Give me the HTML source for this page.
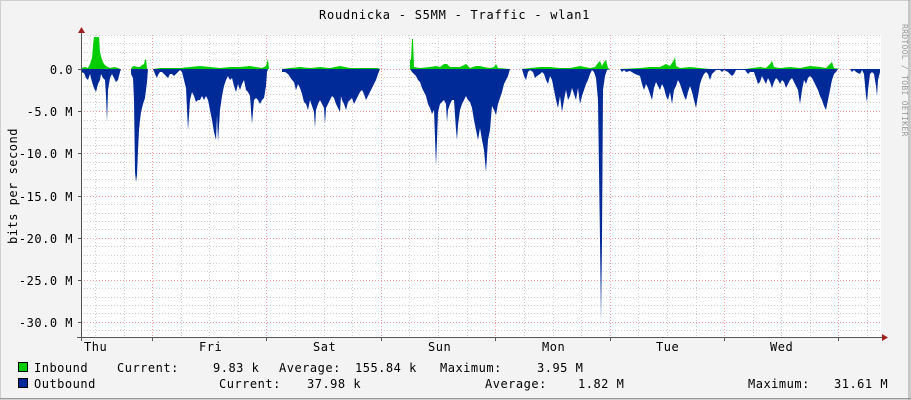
<!DOCTYPE html>
<html><head><meta charset="utf-8"><style>
html,body{margin:0;padding:0;background:#f3f3f3}
svg{display:block}
text{font-family:"DejaVu Sans Mono","Liberation Mono",monospace;fill:#000;letter-spacing:0.5px}
</style></head><body>
<svg width="911" height="400" viewBox="0 0 911 400" xmlns="http://www.w3.org/2000/svg">
<rect x="0" y="0" width="911" height="400" fill="#f3f3f3"/>
<rect x="0.5" y="0.5" width="910" height="399" fill="none" stroke="#cfcfcf"/>
<line x1="909" y1="0" x2="909" y2="400" stroke="#9a9a9a"/>
<line x1="0" y1="398.5" x2="911" y2="398.5" stroke="#9a9a9a"/>
<rect x="81" y="35" width="800" height="302" fill="#fff"/>
<g id="grid" stroke-width="1" shape-rendering="crispEdges">
<g stroke="#cfcfcf" stroke-dasharray="1,2">
<line x1="81" x2="881" y1="35.5" y2="35.5"/><line x1="81" x2="881" y1="43.5" y2="43.5"/><line x1="81" x2="881" y1="52.5" y2="52.5"/><line x1="81" x2="881" y1="60.5" y2="60.5"/>
<line x1="81" x2="881" y1="77.5" y2="77.5"/><line x1="81" x2="881" y1="86.5" y2="86.5"/><line x1="81" x2="881" y1="94.5" y2="94.5"/><line x1="81" x2="881" y1="102.5" y2="102.5"/>
<line x1="81" x2="881" y1="120.5" y2="120.5"/><line x1="81" x2="881" y1="128.5" y2="128.5"/><line x1="81" x2="881" y1="137.5" y2="137.5"/><line x1="81" x2="881" y1="145.5" y2="145.5"/>
<line x1="81" x2="881" y1="162.5" y2="162.5"/><line x1="81" x2="881" y1="170.5" y2="170.5"/><line x1="81" x2="881" y1="179.5" y2="179.5"/><line x1="81" x2="881" y1="187.5" y2="187.5"/>
<line x1="81" x2="881" y1="204.5" y2="204.5"/><line x1="81" x2="881" y1="213.5" y2="213.5"/><line x1="81" x2="881" y1="221.5" y2="221.5"/><line x1="81" x2="881" y1="229.5" y2="229.5"/>
<line x1="81" x2="881" y1="246.5" y2="246.5"/><line x1="81" x2="881" y1="255.5" y2="255.5"/><line x1="81" x2="881" y1="263.5" y2="263.5"/><line x1="81" x2="881" y1="271.5" y2="271.5"/>
<line x1="81" x2="881" y1="288.5" y2="288.5"/><line x1="81" x2="881" y1="297.5" y2="297.5"/><line x1="81" x2="881" y1="305.5" y2="305.5"/><line x1="81" x2="881" y1="313.5" y2="313.5"/>
<line x1="81" x2="881" y1="330.5" y2="330.5"/>
<line y1="35" y2="337" x1="95.5" x2="95.5"/><line y1="35" y2="337" x1="124.5" x2="124.5"/>
<line y1="35" y2="337" x1="181.5" x2="181.5"/><line y1="35" y2="337" x1="209.5" x2="209.5"/><line y1="35" y2="337" x1="238.5" x2="238.5"/>
<line y1="35" y2="337" x1="295.5" x2="295.5"/><line y1="35" y2="337" x1="324.5" x2="324.5"/><line y1="35" y2="337" x1="352.5" x2="352.5"/>
<line y1="35" y2="337" x1="409.5" x2="409.5"/><line y1="35" y2="337" x1="438.5" x2="438.5"/><line y1="35" y2="337" x1="467.5" x2="467.5"/>
<line y1="35" y2="337" x1="524.5" x2="524.5"/><line y1="35" y2="337" x1="553.5" x2="553.5"/><line y1="35" y2="337" x1="581.5" x2="581.5"/>
<line y1="35" y2="337" x1="638.5" x2="638.5"/><line y1="35" y2="337" x1="667.5" x2="667.5"/><line y1="35" y2="337" x1="696.5" x2="696.5"/>
<line y1="35" y2="337" x1="753.5" x2="753.5"/><line y1="35" y2="337" x1="781.5" x2="781.5"/><line y1="35" y2="337" x1="810.5" x2="810.5"/>
<line y1="35" y2="337" x1="867.5" x2="867.5"/>
</g>
<g stroke="#f0a0a0" stroke-dasharray="1,2">
<line x1="81" x2="881" y1="69.5" y2="69.5"/><line x1="81" x2="881" y1="111.5" y2="111.5"/><line x1="81" x2="881" y1="153.5" y2="153.5"/>
<line x1="81" x2="881" y1="196.5" y2="196.5"/><line x1="81" x2="881" y1="238.5" y2="238.5"/><line x1="81" x2="881" y1="280.5" y2="280.5"/><line x1="81" x2="881" y1="322.5" y2="322.5"/>
<line y1="35" y2="337" x1="152.5" x2="152.5"/><line y1="35" y2="337" x1="266.5" x2="266.5"/><line y1="35" y2="337" x1="381.5" x2="381.5"/>
<line y1="35" y2="337" x1="495.5" x2="495.5"/><line y1="35" y2="337" x1="610.5" x2="610.5"/><line y1="35" y2="337" x1="724.5" x2="724.5"/><line y1="35" y2="337" x1="838.5" x2="838.5"/>
</g>
</g>
<path fill="#002a97" d="M81,69 L81,72 84,73 86,78 88,80 90,74 92,82 94,88 96,92 98,84 100,80 101,74 103,78 105,80 106,96 107,122 108,90 110,78 112,74 114,78 116,82 118,80 120,72 121,69 131,69 131,74 133,78 134,100 135,172 136,182 137,175 138,150 139,130 140,120 141,112 143,104 145,98 147,82 148,69 153,69 155,74 157,78 158,75 160,72 162,72 164,74 166,76 168,78 170,74 172,74 174,76 176,74 178,72 180,70 182,72 184,80 186,88 188,130 190,100 192,92 194,96 196,102 198,100 200,100 202,96 204,100 206,96 208,100 210,110 212,120 214,132 216,140 217,115 218,142 220,110 222,96 224,86 226,80 228,76 230,80 232,78 234,86 236,92 238,84 240,90 242,84 244,80 246,90 248,92 250,96 252,124 254,100 256,98 258,100 260,104 262,100 264,98 266,86 267,72 268,69 282,69 282,72 285,72 288,74 292,80 294,82 296,90 298,84 300,88 302,94 304,102 306,104 308,110 310,100 312,106 314,112 315,128 316,110 318,104 320,100 322,104 324,108 325,124 326,108 328,104 330,100 332,96 334,98 336,104 338,108 340,112 341,96 342,100 344,104 346,110 348,102 350,100 352,98 354,104 356,100 358,96 360,92 362,90 364,94 366,100 368,96 370,92 372,88 374,84 376,80 378,74 380,69 410,69 412,72 414,74 416,76 418,80 420,82 422,88 424,92 426,96 428,104 430,108 432,114 434,110 436,166 437,140 438,112 440,104 442,102 444,100 446,104 447,122 448,110 450,104 452,100 454,100 456,130 457,140 458,125 460,110 462,104 464,100 466,96 468,100 470,102 472,108 474,120 476,130 478,140 480,128 482,140 484,150 486,172 488,140 490,130 492,106 494,110 496,115 498,104 500,98 502,92 504,84 506,80 508,76 510,69 522,69 524,76 526,80 528,72 530,70 533,72 535,78 537,76 540,74 542,72 544,74 546,80 548,84 550,76 552,80 554,90 556,100 558,108 560,96 562,112 564,100 566,90 568,100 570,96 572,88 574,94 576,100 578,88 580,104 582,96 584,90 586,84 588,80 590,74 592,70 594,72 596,78 598,100 600,240 601,322 602,240 603,90 605,76 607,70 610,69 620,69 622,72 624,70 626,72 630,71 635,74 640,76 642,84 644,90 646,84 648,88 650,94 652,100 654,88 656,82 658,86 660,90 662,84 664,88 666,96 668,100 670,92 672,104 674,90 676,86 678,80 680,84 682,90 684,96 686,100 688,92 690,86 692,92 694,100 696,108 698,96 700,84 702,78 704,74 706,72 708,74 710,80 712,74 714,72 716,70 720,70 722,72 724,70 728,72 730,74 732,76 734,74 736,70 745,70 748,74 750,72 754,72 756,78 758,84 760,82 762,76 764,80 766,84 768,78 770,82 772,88 774,82 776,78 778,80 780,84 782,80 784,82 786,88 788,84 790,80 792,78 794,82 796,86 798,90 800,104 802,90 804,80 806,84 808,78 810,76 812,78 814,82 816,86 818,90 820,96 822,100 824,106 826,110 828,100 830,90 832,80 834,74 836,72 838,69 850,69 852,72 854,70 856,72 860,74 862,70 864,74 866,96 867,102 868,90 870,74 872,72 874,74 876,86 877,96 878,80 880,72 880,69 Z"/>
<path fill="#00cc00" d="M81,69 L81,68 85,67 88,68 90,64 92,58 93,46 94,37 99,37 100,52 102,60 104,64 106,66 108,67 110,68 114,67 118,68 120,69 131,69 132,67 134,66 138,67 140,67 142,65 144,64 145,60 146,59 147,69 Z M153,69 L160,68 170,68 180,68 190,67 200,66 210,67 220,68 230,67 240,67 250,66 256,67 262,68 266,66 268,59 269,69 Z M282,69 L290,68 300,67 310,68 320,67 330,68 340,66 350,68 360,68 370,68 378,68 380,69 Z M410,69 L410,60 411,60 412,39 413,39 414,67 420,68 430,67 436,66 440,67 444,64 447,64 450,67 460,67 466,64 470,68 476,66 480,66 484,67 490,68 494,67 496,64 498,68 510,69 Z M522,69 L530,68 540,67 550,67 560,68 570,68 580,66 585,67 590,68 595,67 598,63 600,61 602,66 604,62 606,60 608,68 610,69 Z M620,69 L640,68 650,67 660,67 666,64 670,66 674,60 675,57 676,66 680,68 690,67 700,68 710,69 Z M745,69 L760,67 766,68 770,64 772,61 774,67 780,68 790,67 800,68 810,66 820,67 826,68 830,64 832,62 834,68 840,69 Z"/>
<line x1="81.5" y1="32" x2="81.5" y2="341" stroke="#555"/>
<line x1="77" y1="337.5" x2="884" y2="337.5" stroke="#555"/>
<path d="M78,33 L85,33 81.5,27 Z" fill="#a02020"/>
<path d="M882,334 L882,341 888,337.5 Z" fill="#a02020"/>
<g stroke="#555"><line x1="78" x2="81" y1="69.5" y2="69.5"/><line x1="78" x2="81" y1="111.5" y2="111.5"/><line x1="78" x2="81" y1="153.5" y2="153.5"/><line x1="78" x2="81" y1="196.5" y2="196.5"/><line x1="78" x2="81" y1="238.5" y2="238.5"/><line x1="78" x2="81" y1="280.5" y2="280.5"/><line x1="78" x2="81" y1="322.5" y2="322.5"/>
<line x1="152.5" x2="152.5" y1="337" y2="341"/><line x1="266.5" x2="266.5" y1="337" y2="341"/><line x1="381.5" x2="381.5" y1="337" y2="341"/><line x1="495.5" x2="495.5" y1="337" y2="341"/><line x1="610.5" x2="610.5" y1="337" y2="341"/><line x1="724.5" x2="724.5" y1="337" y2="341"/><line x1="838.5" x2="838.5" y1="337" y2="341"/></g>
<text x="319" y="19" font-size="12" style="letter-spacing:0.75px">Roudnicka - S5MM - Traffic - wlan1</text>
<text x="902" y="24" font-size="8" style="fill:#999;letter-spacing:0.3px" transform="rotate(90 902 24)">RRDTOOL / TOBI OETIKER</text>
<text x="17" y="186" font-size="12" text-anchor="middle" transform="rotate(-90 17 186)">bits per second</text>
<g font-size="12" text-anchor="end">
<text x="73" y="74">0.0</text><text x="73" y="116">-5.0 M</text><text x="73" y="158">-10.0 M</text><text x="73" y="201">-15.0 M</text><text x="73" y="243">-20.0 M</text><text x="73" y="285">-25.0 M</text><text x="73" y="327">-30.0 M</text>
</g>
<g font-size="12">
<text x="84" y="351">Thu</text><text x="199" y="351">Fri</text><text x="313" y="351">Sat</text><text x="428" y="351">Sun</text><text x="542" y="351">Mon</text><text x="656" y="351">Tue</text><text x="770" y="351">Wed</text>
</g>
<rect x="18.5" y="362.5" width="9" height="9" fill="#00cc00" stroke="#000"/>
<rect x="18.5" y="378.5" width="9" height="9" fill="#002a97" stroke="#000"/>
<g font-size="12">
<text x="34" y="372">Inbound</text><text x="117" y="372">Current:</text><text x="213" y="372">9.83 k</text><text x="279" y="372">Average:</text><text x="355" y="372">155.84 k</text><text x="440" y="372">Maximum:</text><text x="537" y="372">3.95 M</text>
<text x="34" y="388">Outbound</text><text x="219" y="388">Current:</text><text x="307" y="388">37.98 k</text><text x="485" y="388">Average:</text><text x="578" y="388">1.82 M</text><text x="748" y="388">Maximum:</text><text x="834" y="388">31.61 M</text>
</g>
</svg>
</body></html>
